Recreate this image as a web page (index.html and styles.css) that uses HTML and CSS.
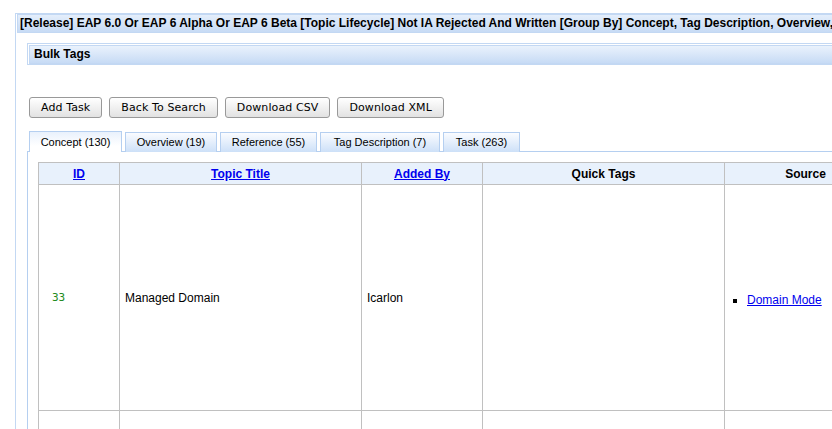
FILE: index.html
```html
<!DOCTYPE html>
<html>
<head>
<meta charset="utf-8">
<link rel="stylesheet" href="styles.css">
</head>
<body>
<div class="page">
  <div class="panel">
    <div class="panel-head">[Release] EAP 6.0 Or EAP 6 Alpha Or EAP 6 Beta [Topic Lifecycle] Not IA Rejected And Written [Group By] Concept, Tag Description, Overview, Reference, Task</div>
    <div class="panel-body">
      <div class="subpanel">
        <div class="subpanel-head">Bulk Tags</div>
      </div>
      <div class="buttons">
        <button class="btn">Add Task</button>
        <button class="btn">Back To Search</button>
        <button class="btn">Download CSV</button>
        <button class="btn">Download XML</button>
      </div>
      <div class="tabs">
        <div class="tabbar">
          <div class="tab active">Concept (130)</div>
          <div class="tab">Overview (19)</div>
          <div class="tab">Reference (55)</div>
          <div class="tab">Tag Description (7)</div>
          <div class="tab">Task (263)</div>
        </div>
        <div class="tabpanel">
          <table class="grid">
            <colgroup>
              <col class="c-id"><col class="c-title"><col class="c-by"><col class="c-tags"><col class="c-src">
            </colgroup>
            <thead>
              <tr>
                <th><a href="#">ID</a></th>
                <th><a href="#">Topic Title</a></th>
                <th><a href="#">Added By</a></th>
                <th>Quick Tags</th>
                <th>Source</th>
              </tr>
            </thead>
            <tbody>
              <tr>
                <td class="id">33</td>
                <td>Managed Domain</td>
                <td>Icarlon</td>
                <td></td>
                <td class="src"><ul><li><a href="#">Domain Mode</a></li></ul></td>
              </tr>
              <tr>
                <td class="id"></td>
                <td></td>
                <td></td>
                <td></td>
                <td></td>
              </tr>
            </tbody>
          </table>
        </div>
      </div>
    </div>
  </div>
</div>
</body>
</html>
```

FILE: styles.css
```css
html, body {
  margin: 0;
  padding: 0;
  overflow: hidden;
  background: #ffffff;
}
body {
  font-family: "Liberation Sans", Arial, sans-serif;
  font-size: 12px;
  color: #000;
}
.page {
  padding: 13px 0 0 15px;
  width: 1100px;
}
.panel {
  border-top: 1px solid #c3d8f3;
  border-left: 1px solid #c3d8f3;
  padding-left: 1px;
}
.panel-head {
  height: 17px;
  line-height: 17px;
  border: 1px solid #c3d8f3;
  border-right: none;
  background: linear-gradient(#e4eefb, #c7dbf5);
  font-weight: bold;
  font-size: 12px;
  padding-left: 2px;
  white-space: nowrap;
  overflow: hidden;
}
.panel-body {
  padding: 10px 0 0 10px;
}
.subpanel {
  border-top: 1px solid #c3d8f3;
  border-left: 1px solid #c3d8f3;
  border-bottom: 1px solid #c3d8f3;
  padding: 1px 0 0 1px;
}
.subpanel-head {
  height: 17px;
  line-height: 17px;
  border: 1px solid #c3d8f3;
  border-right: none;
  background: linear-gradient(#eaf2fc, #c7dbf5);
  font-weight: bold;
  font-size: 12px;
  padding-left: 4px;
}
.buttons {
  display: flex;
  gap: 7px;
  margin: 32px 0 0 2px;
}
.btn {
  font-family: "DejaVu Sans", sans-serif;
  font-size: 11px;
  letter-spacing: 0.1px;
  height: 21px;
  padding: 0 11px;
  border: 1px solid #999;
  border-radius: 3px;
  background: linear-gradient(#ffffff, #e2e2e2);
  color: #000;
  line-height: 19px;
}
.tabs {
  margin-top: 13px;
}
.tabbar {
  display: flex;
  gap: 3px;
  padding-left: 2px;
  border-bottom: 1px solid #b5cff0;
  height: 20px;
  align-items: flex-end;
}
.tab {
  height: 20px;
  line-height: 19px;
  border: 1px solid #b5cff0;
  border-bottom: none;
  background: linear-gradient(#fafcff, #cde0f8);
  font-size: 11px;
  text-align: center;
  margin-bottom: -1px;
  box-sizing: border-box;
}
.tab:nth-child(1) { width: 93px; }
.tab:nth-child(2) { width: 92px; }
.tab:nth-child(3) { width: 97px; }
.tab:nth-child(4) { width: 120px; }
.tab:nth-child(5) { width: 77px; }
.tab.active {
  height: 21px;
  line-height: 21px;
  background: linear-gradient(#e9f1fc, #ffffff 70%);
}
.tabpanel {
  border-left: 1px solid #b5cff0;
  padding: 10px 0 0 10px;
}
.grid {
  border-collapse: collapse;
  table-layout: fixed;
  width: 848px;
}
.c-id { width: 81px; }
.c-title { width: 242px; }
.c-by { width: 121px; }
.c-tags { width: 242px; }
.c-src { width: 162px; }
.grid th, .grid td {
  border: 1px solid #c0c0c0;
  padding: 0 5px;
}
.grid th {
  height: 21px;
  background: #e8f1fc;
  font-weight: bold;
  font-size: 12px;
  text-align: center;
}
.grid a {
  color: #0000ee;
}
.grid td {
  height: 225px;
  font-size: 12px;
  vertical-align: middle;
}
.grid td.id {
  font-family: "DejaVu Sans Mono", monospace;
  color: #228b22;
  padding-left: 13px;
  font-size: 11px;
}
.src ul {
  margin: 4px 0 0 0;
  padding-left: 17px;
  list-style: square;
}
```
